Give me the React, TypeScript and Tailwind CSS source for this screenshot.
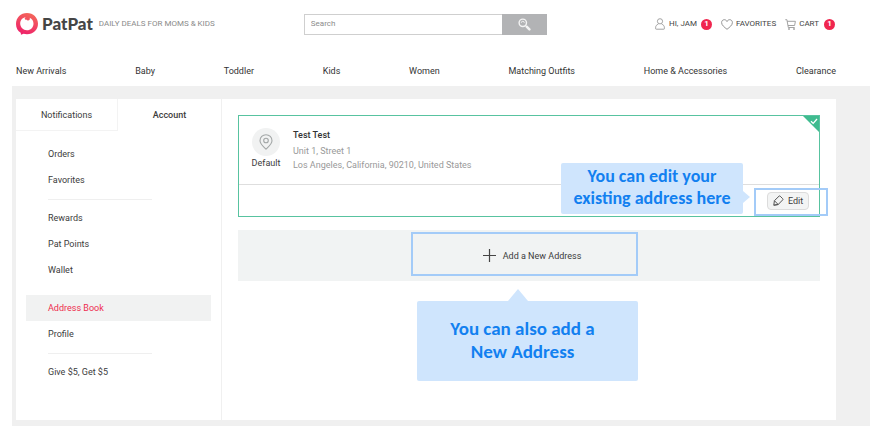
import React from 'react';

const categories = [
  'New Arrivals',
  'Baby',
  'Toddler',
  'Kids',
  'Women',
  'Matching Outfits',
  'Home & Accessories',
  'Clearance',
];

const menuGroups = [
  { items: ['Orders', 'Favorites'], divider: true },
  { items: ['Rewards', 'Pat Points', 'Wallet'], divider: false },
  { items: ['Address Book', 'Profile'], divider: true },
  { items: ['Give $5, Get $5'], divider: false },
];

function Logo() {
  return (
    <a href="#home" className="flex items-center gap-1">
      <svg width="22" height="22" viewBox="0 0 22 22" aria-hidden="true">
        <defs>
          <linearGradient id="ring" x1="0.7" y1="0" x2="0.3" y2="1">
            <stop offset="0" stopColor="#f4685a" />
            <stop offset="1" stopColor="#ee1f6a" />
          </linearGradient>
        </defs>
        <path
          fill="url(#ring)"
          fillRule="evenodd"
          d="M11 0C17.2 0 22 4.700 22 10.700C22 16.700 17.200 21.200 11 21.200C9.700 21.200 8.600 21 7.600 20.700L5 21.800L4.700 19.700C1.800 17.900 0 14.700 0 10.900C0 4.700 4.800 0 11 0ZM9.600 4.200C6.400 4.600 4.200 7.300 4.200 10.600C4.200 14.300 7.200 17.300 10.900 17.300C14.600 17.300 17.500 14.300 17.500 10.700C17.500 8 16 5.700 13.700 4.700C14.300 6.100 13.500 7.400 12 7.500C11.200 7.500 10.700 7.100 10.400 6.600C9.800 7 9 6.800 8.800 6.100C8.600 5.300 9.100 4.700 9.600 4.200Z"
        />
      </svg>
      <span className="font-[Lato,sans-serif] text-[17px] leading-5 font-black text-[#454545]">PatPat</span>
    </a>
  );
}

function Count() {
  return (
    <span className="flex size-[11px] items-center justify-center rounded-full bg-[#f0264f] text-[8px] leading-none font-bold text-white">
      1
    </span>
  );
}

function Header() {
  return (
    <header className="flex items-center pt-[13px] pr-[38px] pl-4">
      <Logo />
      <span className="ml-1.5 text-[8px] whitespace-nowrap text-[#8a8a8a]">DAILY DEALS FOR MOMS &amp; KIDS</span>
      <form className="ml-[89px] flex h-[21px] max-w-[243px] flex-1" onSubmit={(e) => e.preventDefault()}>
        <input
          type="text"
          aria-label="Search"
          placeholder="Search"
          className="min-w-0 flex-1 border border-r-0 border-[#cfcfcf] bg-white px-1.5 text-[8px] text-[#555] outline-none placeholder:text-[#8c8c8c]"
        />
        <button type="submit" aria-label="Submit search" className="flex w-[45px] items-center justify-center bg-[#b2b3b5]">
          <svg width="13" height="13" viewBox="0 0 13 13" fill="none" stroke="#f4f4f4" aria-hidden="true">
            <circle cx="4.800" cy="4.800" r="3.700" strokeWidth="1.400" />
            <path d="M3.300 4.800a1.500 1.500 0 0 1 3 0M7.700 7.700L8.600 8.600" strokeWidth="0.900" />
            <path d="M8.700 8.700L11.400 11.400" strokeWidth="2.400" strokeLinecap="round" />
          </svg>
        </button>
      </form>
      <div className="ml-auto flex items-center gap-[9px] text-[8px] whitespace-nowrap text-[#444]">
        <a href="#account" className="flex items-center gap-1">
          <svg width="10" height="12" viewBox="0 0 10 12" fill="none" stroke="#999" strokeWidth="0.900" aria-hidden="true">
            <circle cx="5" cy="3.300" r="2.600" />
            <path d="M3.300 6.200C1.500 6.700 0.600 8 0.600 9.800V10.600Q0.600 11.200 1.200 11.200H8.800Q9.400 11.200 9.400 10.600V9.800C9.400 8 8.500 6.700 6.700 6.200" />
          </svg>
          HI, JAM
          <Count />
        </a>
        <a href="#favorites" className="flex items-center gap-[3px]">
          <svg width="12" height="11" viewBox="0 0 12 11" fill="none" stroke="#888" strokeWidth="0.900" aria-hidden="true">
            <path d="M6 10.300C3.500 8.300 0.600 6.200 0.600 3.600C0.600 1.900 1.800 0.700 3.300 0.700C4.500 0.700 5.500 1.400 6 2.500C6.500 1.400 7.500 0.700 8.700 0.700C10.200 0.700 11.400 1.900 11.400 3.600C11.400 6.200 8.500 8.300 6 10.300Z" />
          </svg>
          FAVORITES
        </a>
        <a href="#cart" className="flex items-center gap-[3px]">
          <svg width="11" height="11" viewBox="0 0 11 11" fill="none" stroke="#999" strokeWidth="0.900" aria-hidden="true">
            <path d="M0.300 0.700H1.900L3.300 8.500H9.700M2.200 2.300H10.400L9.600 6.500H3" />
            <circle cx="4" cy="10" r="0.600" />
            <circle cx="9" cy="10" r="0.600" />
          </svg>
          <span className="mr-0.5">CART</span>
          <Count />
        </a>
      </div>
    </header>
  );
}

function Sidebar() {
  return (
    <aside className="w-[206px] shrink-0 border-r border-[#f0f0f0]">
      <div className="flex h-8" role="tablist">
        <button type="button" role="tab" aria-selected="false" className="w-[102px] border-r border-b border-[#f3f3f3]">
          Notifications
        </button>
        <button type="button" role="tab" aria-selected="true" className="flex-1 font-medium">
          Account
        </button>
      </div>
      <nav aria-label="Account" className="px-2.5 pt-2.5 pb-[23px]">
        {menuGroups.map((group) => (
          <div key={group.items[0]}>
            {group.items.map((item) => (
              <a
                key={item}
                href="#menu"
                className={
                  item === 'Address Book'
                    ? 'flex h-[26px] items-center bg-[#f1f2f2] pl-[22px] text-[#ee2e4f]'
                    : 'flex h-[26px] items-center pl-[22px]'
                }
              >
                {item}
              </a>
            ))}
            <div className="flex h-3 items-center pl-[22px]">
              {group.divider && <hr className="w-[104px] border-[#efefef]" />}
            </div>
          </div>
        ))}
      </nav>
    </aside>
  );
}

function AddressCard() {
  return (
    <article className="relative border border-[#58c3a0]">
      <svg className="absolute top-0 right-0" width="16" height="16" viewBox="0 0 16 16" aria-hidden="true">
        <path d="M0 0H16V16Z" fill="#3fbb8f" />
        <path d="M8 5.200L10.200 7.400L14 3" fill="none" stroke="#fff" strokeWidth="1.300" />
      </svg>
      <div className="flex h-[69px] gap-3 border-b border-[#dedede] pt-3 pl-3">
        <div className="flex w-[30px] flex-col items-center">
          <span className="flex size-7 items-center justify-center rounded-full bg-[#f1f2f2]">
            <svg width="14" height="16" viewBox="0 0 14 16" fill="none" stroke="#a3a7a7" strokeWidth="1.100" aria-hidden="true">
              <path d="M7 15.200C4.800 12.900 1 10 1 6.700C1 3.300 3.600 0.800 7 0.800S13 3.300 13 6.700C13 10 9.200 12.900 7 15.200Z" />
              <circle cx="7" cy="6.500" r="2.300" />
            </svg>
          </span>
          <span className="leading-[14px]">Default</span>
        </div>
        <address className="leading-[14px] text-[#999] not-italic">
          <p className="font-medium text-[#333]">Test Test</p>
          <p className="mt-0.5">Unit 1, Street 1</p>
          <p>Los Angeles, California, 90210, United States</p>
        </address>
      </div>
      <div className="flex h-[31px] items-center justify-end pr-2.5">
        <button
          type="button"
          className="flex h-[18px] w-[42px] items-center justify-center gap-1 rounded-sm border border-[#dcdcdc] bg-[#f3f4f4]"
        >
          <svg width="11" height="11" viewBox="0 0 11 11" fill="none" stroke="#555" strokeWidth="1" strokeLinejoin="round" aria-hidden="true">
            <path d="M0.800 10.200L1.400 5.700L6 1.200Q6.600 0.600 7.200 1.200L9.700 3.700Q10.300 4.300 9.700 4.900L5.200 9.500ZM0.800 10.200L5.200 9.500M1.400 5.700L5.200 9.500" />
          </svg>
          Edit
        </button>
      </div>
      {/* Highlight frame and hint for the edit button */}
      <div className="pointer-events-none absolute right-[-9px] bottom-0 h-7 w-[74px] border-2 border-[#a3cbf8]" />
      <div className="absolute right-[76px] bottom-0.5 w-[182px] rounded-xs bg-[#cfe5fd] pt-0.5 pb-[5px] text-center font-[Carlito,Lato,sans-serif] text-lg leading-[22px] font-bold whitespace-nowrap text-[#1280f0]">
        You can edit your
        <br />
        existing address here
        <svg className="absolute top-7 left-full" width="7" height="12" viewBox="0 0 7 12" aria-hidden="true">
          <path d="M0 0L7 6L0 12Z" fill="#cfe5fd" />
        </svg>
      </div>
    </article>
  );
}

function AddAddress() {
  return (
    <div className="relative mt-[13px]">
      <button type="button" className="flex h-[51px] w-full items-center justify-center gap-[7px] bg-[#f1f3f3] pl-1.5">
        <svg width="13" height="13" viewBox="0 0 13 13" stroke="#444" strokeWidth="1.200" aria-hidden="true">
          <path d="M6.500 0V13M0 6.500H13" />
        </svg>
        Add a New Address
      </button>
      {/* Highlight frame and hint for the add button */}
      <div className="pointer-events-none absolute top-0.5 left-[calc(50%-118px)] h-11 w-[227px] border-2 border-[#a3cbf8]" />
      <div className="absolute top-[71px] left-[calc(50%-112px)] w-[221px] rounded-xs bg-[#cfe5fd] pt-4 pr-2.5 pb-[18px] text-center font-[Carlito,Lato,sans-serif] text-[19px] leading-[23px] font-bold text-[#1280f0]">
        You can also add a
        <br />
        New Address
        <svg className="absolute bottom-full left-[91px]" width="20" height="12" viewBox="0 0 20 12" aria-hidden="true">
          <path d="M0 12L10 0L20 12Z" fill="#cfe5fd" />
        </svg>
      </div>
    </div>
  );
}

export default function App() {
  return (
    <div className="bg-white pb-1 font-[Roboto,sans-serif] text-[9px] leading-3 text-[#3c3c3c]">
      <Header />
      <nav aria-label="Categories" className="flex justify-between pt-[30px] pr-[37px] pb-[9px] pl-4 text-[#333]">
        {categories.map((name) => (
          <a key={name} href="#category">
            {name}
          </a>
        ))}
      </nav>
      <main className="mr-[3px] ml-3 bg-[#f0f0f0] pt-[13px] pr-[34px] pb-1.5 pl-1">
        <div className="flex bg-white">
          <Sidebar />
          <section aria-label="Address Book" className="min-w-0 flex-1 pt-4 pr-4 pl-4">
            <AddressCard />
            <AddAddress />
          </section>
        </div>
      </main>
    </div>
  );
}
